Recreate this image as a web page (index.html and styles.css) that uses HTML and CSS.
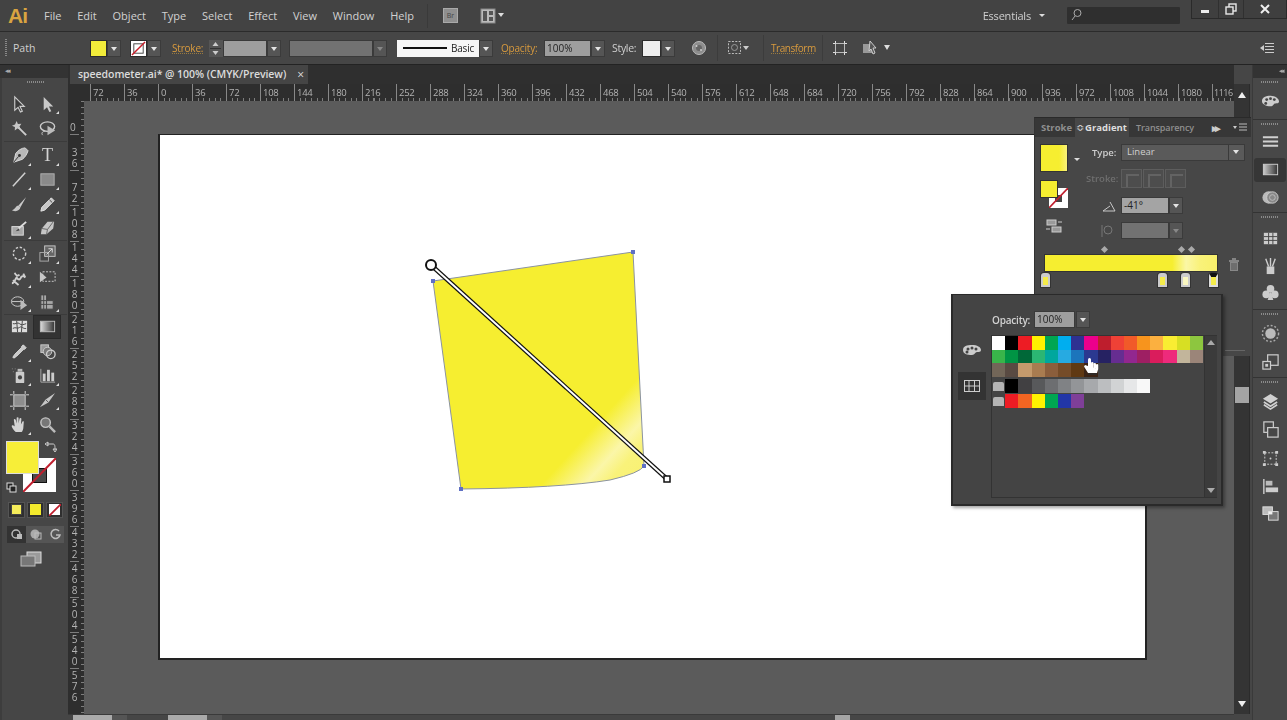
FILE: index.html
```html
<!DOCTYPE html>
<html lang="en">
<head>
<meta charset="utf-8">
<title>speedometer.ai</title>
<link rel="stylesheet" href="styles.css">
</head>
<body>
<div class="app">
  <header class="menubar">
    <div class="logo">Ai</div>
    <nav class="menus"><span>File</span><span>Edit</span><span>Object</span><span>Type</span><span>Select</span><span>Effect</span><span>View</span><span>Window</span><span>Help</span></nav>
    <div class="vsep"></div>
    <div class="br-btn">Br</div>
    <svg class="arr-btn" width="26" height="16" viewBox="0 0 26 16"><rect x="1" y="1" width="14" height="14" fill="#bbb" stroke="#888"/><rect x="3" y="3" width="4" height="10" fill="#555"/><rect x="9" y="3" width="4" height="4" fill="#555"/><rect x="9" y="9" width="4" height="4" fill="#555"/><path d="M18 5h6l-3 4z" fill="#ddd"/></svg>
    <div class="essentials">Essentials<i class="tiny-arrow"></i></div>
    <div class="search"><svg width="12" height="14" viewBox="0 0 12 14"><circle cx="7.500" cy="5" r="3.500" fill="none" stroke="#aaa"/><path d="M5 8l-3 4" stroke="#aaa"/></svg></div>
    <div class="winbtns">
      <div class="winbtn b1"><i class="min"></i></div>
      <div class="winbtn b2"><svg width="12" height="12" viewBox="0 0 12 12"><rect x="4" y="1" width="7" height="7" fill="none" stroke="#e8e8e8" stroke-width="1.400"/><rect x="1" y="4" width="7" height="7" fill="#444" stroke="#e8e8e8" stroke-width="1.400"/></svg></div>
      <div class="winbtn wide"><svg width="10" height="10" viewBox="0 0 10 10"><path d="M1 1l8 8M9 1l-8 8" stroke="#eee" stroke-width="2"/></svg></div>
    </div>
  </header>

  <section class="controlbar">
    <i class="grip-v"></i>
    <span class="ctl-path">Path</span>
    <div class="swatch yellow s-fill"></div><i class="dd"></i>
    <div class="swatch nostroke s-stroke"><svg width="15" height="15" viewBox="0 0 16 16"><rect x="3" y="3" width="10" height="10" fill="none" stroke="#444"/><path d="M1 15L15 1" stroke="#c8202c" stroke-width="1.600"/></svg></div><i class="dd"></i>
    <span class="orange m-stroke">Stroke:</span>
    <div class="spin"><svg width="13" height="17" viewBox="0 0 13 17"><path d="M6.500 2l3 4h-6zM6.500 15l3-4h-6z" fill="#ccc"/><path d="M1 8.500h11" stroke="#333"/></svg></div>
    <div class="input w44"></div><i class="dd"></i>
    <div class="input dis w84 m-dis"></div><i class="dd off"></i>
    <div class="basic"><i class="basic-line"></i><span>Basic</span></div><i class="dd"></i>
    <span class="orange m-opac">Opacity:</span>
    <div class="input w47 m-opin">100%</div><i class="dd"></i>
    <span class="style-lab">Style:</span>
    <div class="swatch style-sw"></div><i class="dd"></i>
    <svg class="m-globe" width="16" height="16" viewBox="0 0 16 16"><circle cx="8" cy="8" r="6.500" fill="#8d8d8d" stroke="#bbb"/><circle cx="8" cy="8" r="3" fill="#666"/><circle cx="5.500" cy="6" r="1" fill="#ccc"/><circle cx="10" cy="10" r="1" fill="#ccc"/></svg>
    <i class="cvsep m-s1"></i>
    <svg class="m-sel" width="24" height="16" viewBox="0 0 24 16"><rect x="1.500" y="1.500" width="12" height="12" fill="none" stroke="#bbb" stroke-dasharray="2 1.400"/><circle cx="7.500" cy="7.500" r="3" fill="none" stroke="#999"/><path d="M16 6h6l-3 4z" fill="#ccc"/></svg>
    <i class="cvsep m-s2"></i>
    <span class="orange dotted m-trans">Transform</span>
    <i class="cvsep m-s3"></i>
    <svg class="m-ic1" width="14" height="14" viewBox="0 0 14 14"><rect x="2.500" y="2.500" width="9" height="9" fill="none" stroke="#bbb"/><path d="M0 2.500h2.500M11.500 2.500H14M0 11.500h2.500M11.500 11.500H14M2.500 0v2.500M11.500 0v2.500M2.500 11.500V14M11.500 11.500V14" stroke="#ddd"/></svg>
    <svg class="m-ic2" width="30" height="16" viewBox="0 0 30 16"><rect x="1" y="4" width="9" height="9" fill="#999"/><path d="M8 1l6 7-3 0 2 5-2 1-2-5-2 2z" fill="#555" stroke="#ccc"/><path d="M22 5h6l-3 5z" fill="#ddd"/></svg>
    <svg class="m-menu" width="14" height="12" viewBox="0 0 14 12"><path d="M5 1.500h9M5 4.500h9M5 7.500h9M5 10.500h9" stroke="#ccc"/><path d="M0 6l4-3v6z" fill="#ccc"/></svg>
  </section>

  <main class="workspace">
    <aside class="toolstrip">
      <div class="strip-head"><span class="chev">◂◂</span></div>
      <div class="toolbox">
        <i class="grip-h"></i>
        <div class="toolgroup first">
          <div class="tool"><svg viewBox="0 0 20 20"><path d="M5 2v14l3.500-3 2.500 5 2-1-2.500-5H15z" fill="#3c3c3c" stroke="#ccc" stroke-width="1.200"/></svg></div>
          <div class="tool more"><svg viewBox="0 0 20 20"><path d="M6 2v14l3.500-3 2.500 5 2-1-2.500-5H16z" fill="#c9c9c9"/></svg></div>
          <div class="tool"><svg viewBox="0 0 20 20"><path d="M7 2l1.300 3.200L12 5l-2 2.800 1.200 3.200-3.400-1L5 12l.2-3.500L2 7l3.300-1.300z" fill="#c6c6c6"/><path d="M9 9l8 8" stroke="#ccc" stroke-width="2"/></svg></div>
          <div class="tool"><svg viewBox="0 0 20 20"><ellipse cx="10" cy="8" rx="7.500" ry="5" fill="none" stroke="#ccc" stroke-width="1.500"/><path d="M5 17c-2-2 0-4 2-4" fill="none" stroke="#ccc"/><path d="M10 7l8 5-8 5z" fill="#bbb"/></svg></div>
        </div>
        <div class="toolgroup">
          <div class="tool more"><svg viewBox="0 0 20 20"><path d="M16 2c-4 0-8 3-10 6l-2 9 9-3c3-2 5-6 6-9z" fill="#b8b8b8" stroke="#ddd"/><path d="M4 17l5-6" stroke="#333"/><circle cx="10" cy="10" r="1.500" fill="#333"/></svg></div>
          <div class="tool more"><svg viewBox="0 0 20 20"><text x="10" y="16" class="tee">T</text></svg></div>
          <div class="tool more"><svg viewBox="0 0 20 20"><path d="M3 17L16 3" stroke="#d0d0d0" stroke-width="1.600"/></svg></div>
          <div class="tool more"><svg viewBox="0 0 20 20"><rect x="3" y="4" width="14" height="12" fill="#8a8a8a" stroke="#b0b0b0"/></svg></div>
          <div class="tool"><svg viewBox="0 0 20 20"><path d="M17 2L9 11l2 2z" fill="#ccc"/><path d="M9 11c-3 0-3 4-7 5 4 2 8 1 9-3z" fill="#c6c6c6"/></svg></div>
          <div class="tool more"><svg viewBox="0 0 20 20"><path d="M14 3l3 3L7 16l-4 1 1-4z" fill="#c6c6c6" stroke="#e2e2e2"/><path d="M12 5l3 3" stroke="#444"/></svg></div>
          <div class="tool more"><svg viewBox="0 0 20 20"><rect x="2" y="8" width="12" height="9" fill="#a8a8a8" stroke="#ddd"/><path d="M17 3L9 10" stroke="#ddd" stroke-width="2"/><path d="M9 10l-3 3 4-1z" fill="#444"/></svg></div>
          <div class="tool"><svg viewBox="0 0 20 20"><path d="M10 3h7l-1 7-7 6H3l1-6z" fill="#c6c6c6"/><path d="M4 10l6 1 6-8M10 11l-1 5" stroke="#666" fill="none"/></svg></div>
        </div>
        <div class="toolgroup">
          <div class="tool more"><svg viewBox="0 0 20 20"><circle cx="10" cy="10" r="6.500" fill="none" stroke="#ccc" stroke-width="1.500" stroke-dasharray="2.500 1.800"/></svg></div>
          <div class="tool more"><svg viewBox="0 0 20 20"><rect x="7" y="2" width="11" height="11" fill="#666" stroke="#c8c8c8"/><rect x="2" y="9" width="9" height="9" fill="none" stroke="#aaa"/><path d="M9 11l6-6M11 5h4v4" stroke="#ddd" fill="none"/></svg></div>
          <div class="tool more"><svg viewBox="0 0 20 20"><path d="M2 16c3 0 3-4 5-6 1 2 3 3 4 1 1-3 3-3 5-1l-2-4M5 5c1 3 3 4 5 2M3 13l6 5" fill="none" stroke="#cfcfcf" stroke-width="2"/></svg></div>
          <div class="tool"><svg viewBox="0 0 20 20"><path d="M2 4v11l7-5z" fill="#c6c6c6"/><rect x="5" y="4" width="13" height="10" fill="none" stroke="#ccc" stroke-dasharray="2 1.500"/></svg></div>
          <div class="tool more"><svg viewBox="0 0 20 20"><ellipse cx="8" cy="9" rx="6.500" ry="5" fill="none" stroke="#ccc"/><path d="M2 9h12" stroke="#ccc"/><path d="M11 7l7 6-7 5z" fill="#bbb"/></svg></div>
          <div class="tool more"><svg viewBox="0 0 20 20"><path d="M3 2h6v6h7v9H3zM3 8h6M3 12h13M9 8v9M6 2v15" fill="#a8a8a8" stroke="#444"/></svg></div>
        </div>
        <div class="toolgroup last">
          <div class="tool"><svg viewBox="0 0 20 20"><rect x="2" y="4" width="16" height="12" fill="#ddd"/><path d="M3 7c3 1 5-2 7 0s4 1 7 0M3 12c3-2 5 1 7-1s4 2 7 1M7 4l1 12M13 4l-1 12" fill="none" stroke="#444"/></svg></div>
          <div class="tool active"><svg viewBox="0 0 20 20"><defs><linearGradient id="gt"><stop offset="0" stop-color="#ddd"/><stop offset="1" stop-color="#333"/></linearGradient></defs><rect x="2.500" y="4.500" width="15" height="11" fill="url(#gt)" stroke="#bbb"/></svg></div>
          <div class="tool more"><svg viewBox="0 0 20 20"><path d="M14 3l3 3-2 2-1 0-7 7-3 2-1-1 2-3 7-7 0-1z" fill="#c9c9c9" stroke="#ddd"/></svg></div>
          <div class="tool"><svg viewBox="0 0 20 20"><rect x="3" y="3" width="8" height="8" fill="#999" stroke="#ccc"/><circle cx="10" cy="10" r="4.500" fill="#777" stroke="#ccc"/><circle cx="13.500" cy="13" r="4.500" fill="none" stroke="#ccc" stroke-width="1.400"/></svg></div>
          <div class="tool more"><svg viewBox="0 0 20 20"><rect x="6" y="6" width="9" height="12" rx="1" fill="#ccc"/><rect x="8" y="3" width="5" height="3" fill="#bbb"/><circle cx="10.500" cy="12" r="2.200" fill="#444"/><path d="M2 3h1M5 3h1M3 6h1" stroke="#888"/></svg></div>
          <div class="tool more"><svg viewBox="0 0 20 20"><path d="M3 3v14h15" fill="none" stroke="#aaa"/><rect x="5" y="8" width="3" height="8" fill="#ccc"/><rect x="9.500" y="4" width="3" height="12" fill="#ccc"/><rect x="14" y="7" width="3" height="9" fill="#ccc"/></svg></div>
          <div class="tool"><svg viewBox="0 0 20 20"><rect x="4" y="4" width="12" height="12" fill="#8e8e8e" stroke="#ccc"/><path d="M0 4h3M17 4h3M0 16h3M17 16h3M4 0v3M16 0v3M4 17v3M16 17v3" stroke="#ddd"/></svg></div>
          <div class="tool more"><svg viewBox="0 0 20 20"><path d="M18 2L8 9l-6 8 9-5z" fill="#c6c6c6"/><path d="M8 9l3 3" stroke="#555"/></svg></div>
          <div class="tool more"><svg viewBox="0 0 20 20"><path d="M6 18c-2-2-5-6-4-7s3 1 3 1L4 5c0-1 1.500-1 2 0l1 4 0-6c0-1 2-1 2 0v6l1-5c0-1 2-1 2 0l-.5 6 1.500-3c.5-1 2-.5 1.500.5L14 14c-.5 2-1 4-2 4z" fill="#d4d4d4"/></svg></div>
          <div class="tool"><svg viewBox="0 0 20 20"><circle cx="8" cy="8" r="5" fill="#777" stroke="#c4c4c4" stroke-width="1.500"/><path d="M12 12l6 6" stroke="#bbb" stroke-width="2.500"/></svg></div>
        </div>
        <div class="fillstroke">
          <div class="fs-stroke"><i></i><svg width="33" height="34" viewBox="0 0 33 34"><path d="M0 34L33 0" stroke="#c01f2e" stroke-width="2"/></svg></div>
          <div class="fs-fill"></div>
          <svg class="fs-swap" width="12" height="12" viewBox="0 0 12 12"><path d="M2 3h6c2 0 2 2 2 6M0 3l3-2v4zM10 11L8 8h4z" fill="none" stroke="#ccc" stroke-width="1"/></svg>
          <svg class="fs-def" width="11" height="11" viewBox="0 0 11 11"><rect x="1" y="1" width="6" height="6" fill="#222" stroke="#ddd"/><rect x="4" y="4" width="6" height="6" fill="#222" stroke="#ddd"/></svg>
        </div>
        <div class="modes">
          <div class="mode"><i class="m-y1"></i></div>
          <div class="mode"><i class="m-y2"></i></div>
          <div class="mode"><i class="m-none"><svg width="12" height="12" viewBox="0 0 12 12"><path d="M0 12L12 0" stroke="#c01f2e" stroke-width="1.800"/></svg></i></div>
        </div>
        <div class="draws">
          <div class="draw dark"><svg width="12" height="12" viewBox="0 0 12 12"><circle cx="5" cy="6" r="4" fill="none" stroke="#bbb" stroke-width="1.500"/><rect x="6" y="6" width="5" height="5" fill="#bbb"/></svg></div>
          <div class="draw"><svg width="12" height="12" viewBox="0 0 12 12"><circle cx="5" cy="6" r="4.500" fill="#aaa"/><rect x="5" y="5" width="6" height="6" fill="none" stroke="#bbb"/></svg></div>
          <div class="draw"><svg width="12" height="12" viewBox="0 0 12 12"><path d="M10 3a4.500 4.500 0 1 0 1 4H7" fill="none" stroke="#bbb" stroke-width="1.500"/></svg></div>
        </div>
        <div class="screenmode"><svg width="22" height="16" viewBox="0 0 22 16"><rect x="7" y="1" width="14" height="11" fill="#9a9a9a" stroke="#ddd"/><rect x="1" y="5" width="14" height="10" fill="#777" stroke="#bbb"/></svg></div>
      </div>
    </aside>

    <div class="docarea">
      <div class="tabs"><div class="tab">speedometer.ai* @ 100% (CMYK/Preview)<span class="tabx">×</span></div></div>
      <div class="hruler">
        <span>72</span><span>36</span><span>0</span><span>36</span><span>72</span><span>108</span><span>144</span><span>180</span><span>216</span><span>252</span><span>288</span><span>324</span><span>360</span><span>396</span><span>432</span><span>468</span><span>504</span><span>540</span><span>576</span><span>612</span><span>648</span><span>684</span><span>720</span><span>756</span><span>792</span><span>828</span><span>864</span><span>900</span><span>936</span><span>972</span><span>1008</span><span>1044</span><span>1080</span><span>1116</span>
      </div>
      <div class="midrow">
        <div class="vruler">
          <span class="v0">0</span><span>36</span><span>72</span><span>108</span><span>144</span><span>180</span><span>216</span><span>252</span><span>288</span><span>324</span><span>360</span><span>396</span><span>432</span><span>468</span><span>504</span><span>540</span><span>576</span>
        </div>
        <div class="canvas">
          <div class="artboard"></div>
          <svg class="art" width="1152" height="613" viewBox="84 101 1152 613">
            <defs>
              <linearGradient id="fillg" gradientUnits="userSpaceOnUse" x1="431" y1="265" x2="667" y2="479">
                <stop offset="0" stop-color="#f6ee30"/>
                <stop offset=".72" stop-color="#f6ee30"/>
                <stop offset=".82" stop-color="#fbf6a8"/>
                <stop offset=".87" stop-color="#f9f27a"/>
                <stop offset="1" stop-color="#f8f06a"/>
              </linearGradient>
            </defs>
            <path d="M433 281L633 252L644 466Q640 473 610 480Q560 488 461 489Z" fill="url(#fillg)" stroke="#8b93a0" stroke-width="1"/>
            <g fill="#5f70c4"><rect x="431" y="279" width="4" height="4"/><rect x="631" y="250" width="4" height="4"/><rect x="642" y="464" width="4" height="4"/><rect x="459" y="487" width="4" height="4"/></g>
            <path d="M431 265L667 479" stroke="#111" stroke-width="4.400"/>
            <path d="M431 265L667 479" stroke="#fff" stroke-width="2"/>
            <circle cx="431" cy="265" r="5" fill="#fff" stroke="#111" stroke-width="2"/>
            <rect x="664" y="476" width="6" height="6" fill="#fff" stroke="#111" stroke-width="1.500"/>
          </svg>
        </div>
      </div>
      <div class="status">
        <div class="st-light"></div><i class="st-dd"></i><div class="st-mid"></div>
        <div class="st-light"></div><i class="st-dd"></i><div class="st-mid"></div>
        <div class="st-fill"></div>
        <i class="st-thumb"></i>
      </div>
    </div>

    <div class="vscroll"><i class="tri-up"></i><i class="thumb"></i><i class="tri-down"></i></div>

    <aside class="dock">
      <div class="strip-head right"><span class="chev">◂◂</span></div>
      <div class="dockgroup g1"><i class="grip-h"></i>
        <div class="dic"><svg viewBox="0 0 20 20"><path d="M10 4c5 0 9 3 9 6 0 2-2 2-4 2s-2 3-5 3c-5 0-9-2-9-5.500S5 4 10 4z" fill="#ccc"/><circle cx="6" cy="8" r="1.500" fill="#444"/><circle cx="10" cy="7" r="1.500" fill="#444"/><circle cx="14" cy="8" r="1.500" fill="#444"/><circle cx="5" cy="12" r="1.500" fill="#444"/></svg></div>
      </div>
      <div class="dockgroup g2"><i class="grip-h"></i>
        <div class="dic"><svg viewBox="0 0 20 20"><path d="M2 5.500h16M2 10h16M2 14.500h16" stroke="#d0d0d0" stroke-width="2"/></svg></div>
        <div class="dic act"><svg viewBox="0 0 20 20"><defs><linearGradient id="gd"><stop offset="0" stop-color="#ccc"/><stop offset="1" stop-color="#333"/></linearGradient></defs><rect x="2.500" y="4.500" width="15" height="11" fill="url(#gd)" stroke="#ccc"/></svg></div>
        <div class="dic"><svg viewBox="0 0 20 20"><circle cx="8" cy="10" r="6.500" fill="#bbb"/><circle cx="12" cy="10" r="6" fill="#888" stroke="#ccc"/><circle cx="12" cy="10" r="3" fill="none" stroke="#bbb"/></svg></div>
      </div>
      <div class="dockgroup g3"><i class="grip-h"></i>
        <div class="dic"><svg viewBox="0 0 20 20"><rect x="3" y="4" width="14" height="12" fill="#ccc"/><path d="M3 8h14M3 12h14M8 4v12M12.500 4v12" stroke="#444"/></svg></div>
        <div class="dic"><svg viewBox="0 0 20 20"><rect x="6" y="11" width="8" height="8" fill="#ccc"/><path d="M8 11L5 3M10 11V2M12 11l3-8" stroke="#ccc" stroke-width="1.500"/></svg></div>
        <div class="dic"><svg viewBox="0 0 20 20"><circle cx="10" cy="6" r="4" fill="#ccc"/><circle cx="5.500" cy="12" r="4" fill="#ccc"/><circle cx="14.500" cy="12" r="4" fill="#ccc"/><path d="M10 9l3 9H7z" fill="#ccc"/></svg></div>
      </div>
      <div class="dockgroup g4"><i class="grip-h"></i>
        <div class="dic"><svg viewBox="0 0 20 20"><circle cx="10" cy="10" r="5.500" fill="#bbb"/><circle cx="10" cy="10" r="8.500" fill="none" stroke="#aaa" stroke-width="1.500" stroke-dasharray="2 2"/></svg></div>
        <div class="dic"><svg viewBox="0 0 20 20"><rect x="7" y="3" width="11" height="11" fill="none" stroke="#ccc" stroke-width="1.300"/><rect x="2" y="10" width="8" height="8" fill="#474747" stroke="#ccc" stroke-width="1.300"/><rect x="4.500" y="12.500" width="3" height="3" fill="#ccc"/></svg></div>
      </div>
      <div class="dockgroup g5"><i class="grip-h"></i>
        <div class="dic"><svg viewBox="0 0 20 20"><path d="M10 2l8 5-8 5-8-5z" fill="#d0d0d0"/><path d="M3 10.500l7 4.500 7-4.500M3 13.500l7 4.500 7-4.500" fill="none" stroke="#d0d0d0" stroke-width="1.800"/></svg></div>
        <div class="dic"><svg viewBox="0 0 20 20"><rect x="3" y="2" width="10" height="11" fill="none" stroke="#ccc" stroke-width="1.300"/><rect x="7" y="8" width="11" height="10" fill="#474747" stroke="#ccc" stroke-width="1.300"/></svg></div>
        <div class="dic"><svg viewBox="0 0 20 20"><rect x="4" y="4" width="12" height="12" fill="none" stroke="#ccc" stroke-dasharray="2 1.500"/><path d="M2 2h3v3H2zM15 2h3v3h-3zM2 15h3v3H2zM15 15h3v3h-3z" fill="#ccc"/><circle cx="10" cy="10" r="1" fill="#ccc"/></svg></div>
        <div class="dic"><svg viewBox="0 0 20 20"><path d="M3 2v16" stroke="#ccc" stroke-width="1.500"/><rect x="5" y="4" width="7" height="5" fill="#bbb"/><rect x="5" y="11" width="13" height="5" fill="#ccc"/></svg></div>
        <div class="dic last-ic"><svg viewBox="0 0 20 20"><rect x="2" y="3" width="10" height="8" fill="#bbb" stroke="#ddd"/><rect x="8" y="8" width="10" height="9" fill="#777" stroke="#ddd"/><rect x="8" y="8" width="4" height="3" fill="#eee"/></svg></div>
      </div>
    </aside>
  </main>

  <section class="gradpanel">
    <div class="gp-tabs">
      <span class="gp-tab">Stroke</span>
      <span class="gp-tab on"><b class="updown">≎</b>Gradient</span>
      <span class="gp-tab clip">Transparency</span>
      <span class="gp-more">▸▸</span>
      <svg class="gp-menu" width="14" height="10" viewBox="0 0 14 10"><path d="M0 3h4l-2 3z" fill="#ccc"/><path d="M6 1h8M6 4h8M6 7h8" stroke="#bbb"/></svg>
    </div>
    <div class="gp-body">
      <div class="gp-left">
        <div class="big-sw-row"><div class="big-sw"></div><i class="tiny-arrow"></i></div>
        <div class="small-sw">
          <div class="ss-stroke"><svg width="19" height="20" viewBox="0 0 19 20"><rect x="6" y="7" width="7" height="7" fill="#444"/><path d="M0 20L19 0" stroke="#c01f2e" stroke-width="1.600"/></svg></div>
          <div class="ss-fill"></div>
        </div>
        <svg class="rev-ic" width="16" height="14" viewBox="0 0 16 14"><rect x="1" y="1" width="9" height="5" fill="#999" stroke="#ccc"/><rect x="6" y="8" width="9" height="5" fill="#999" stroke="#ccc"/><path d="M12 3h4M0 10h4" stroke="#ccc"/></svg>
      </div>
      <div class="gp-form">
        <div class="gp-row r-type"><label>Type:</label><div class="selectbox">Linear<i class="sel-div"></i></div></div>
        <div class="gp-row r-str"><label class="dim">Stroke:</label><div class="str-btns"><i></i><i></i><i></i></div></div>
        <div class="gp-row r-ang"><svg class="ang" width="14" height="12" viewBox="0 0 14 12"><path d="M1 11h12L8 2M1 11l7-5" fill="none" stroke="#c8c8c8"/></svg><div class="input w48 ang-in">-41°</div><i class="dd"></i></div>
        <div class="gp-row r-asp"><svg class="ang dimic" width="14" height="14" viewBox="0 0 14 14"><path d="M2 1v12" stroke="#777"/><circle cx="8" cy="6" r="4" fill="none" stroke="#777"/></svg><div class="input dis w48"></div><i class="dd off"></i></div>
      </div>
    </div>
    <div class="gp-slider">
      <i class="dia d1"></i><i class="dia d2"></i><i class="dia d3"></i>
      <div class="gbar"></div>
      <svg class="trash" width="12" height="14" viewBox="0 0 12 14"><path d="M1 3h10M4 1h4" stroke="#999" stroke-width="1.400"/><path d="M2 4h8v9H2z" fill="#888"/><path d="M4 5v7M6 5v7M8 5v7" stroke="#555"/></svg>
      <i class="stop s1"></i><i class="stop s2"></i><i class="stop s3"></i><i class="stop s4"></i>
    </div>
    <i class="grip-h gp-grip"></i>
  </section>

  <section class="flyout">
    <div class="fly-op"><span>Opacity:</span><div class="input w41">100%</div><i class="dd"></i></div>
    <div class="fly-body">
      <div class="fly-side">
        <div class="fs-btn"><svg width="20" height="16" viewBox="0 0 20 16"><path d="M10 2c5 0 9 2 9 5 0 2-2 2-4 2s-2 3-5 3c-5 0-9-1-9-5s4-5 9-5z" fill="#ccc"/><circle cx="6" cy="6" r="1.500" fill="#444"/><circle cx="10" cy="5" r="1.500" fill="#444"/><circle cx="14" cy="6" r="1.500" fill="#444"/><circle cx="5" cy="9" r="1.500" fill="#444"/></svg></div>
        <div class="fs-btn on"><svg width="16" height="12" viewBox="0 0 16 12"><rect x=".5" y=".5" width="15" height="11" fill="#333" stroke="#ccc"/><path d="M0 6h16M5 0v12M10.500 0v12" stroke="#ccc"/></svg></div>
      </div>
      <div class="fly-list">
        <div class="swatches">
          <i style="background:#fff"></i><i style="background:#000"></i><i style="background:#ed1c24"></i><i style="background:#fff200"></i><i style="background:#00a651"></i><i style="background:#00aeef"></i><i style="background:#2e3192"></i><i style="background:#ec008c"></i><i style="background:#be1e2d"></i><i style="background:#ef4136"></i><i style="background:#f15a29"></i><i style="background:#f7941d"></i><i style="background:#fbb040"></i><i style="background:#f9ed32"></i><i style="background:#d7df23"></i><i style="background:#8dc63f"></i>
          <i style="background:#39b54a"></i><i style="background:#009444"></i><i style="background:#006838"></i><i style="background:#2bb673"></i><i style="background:#00a79d"></i><i style="background:#27aae1"></i><i style="background:#1c75bc"></i><i style="background:#2b3990"></i><i style="background:#262262"></i><i style="background:#662d91"></i><i style="background:#92278f"></i><i style="background:#9e1f63"></i><i style="background:#da1c5c"></i><i style="background:#ee2a7b"></i><i style="background:#c2b59b"></i><i style="background:#9b8579"></i>
          <i style="background:#726658"></i><i style="background:#594a42"></i><i style="background:#c49a6c"></i><i style="background:#a97c50"></i><i style="background:#8b5e3c"></i><i style="background:#754c29"></i><i style="background:#603913"></i><i style="background:#3c2415"></i>
        </div>
        <div class="swatches grp">
          <i class="folder"></i><i style="background:#000"></i><i style="background:#414042"></i><i style="background:#58595b"></i><i style="background:#6d6e71"></i><i style="background:#808285"></i><i style="background:#939598"></i><i style="background:#a7a9ac"></i><i style="background:#bcbec0"></i><i style="background:#d1d3d4"></i><i style="background:#e6e7e8"></i><i style="background:#f8f8f8"></i>
        </div>
        <div class="swatches grp2">
          <i class="folder"></i><i style="background:#ed1c24"></i><i style="background:#f26522"></i><i style="background:#fff200"></i><i style="background:#00a651"></i><i style="background:#2236a8"></i><i style="background:#7f3f98"></i>
        </div>
        <div class="fly-scroll"><i class="tri-up small"></i><i class="tri-down small"></i></div>
      </div>
    </div>
    <svg class="cursor" width="16" height="18" viewBox="0 0 16 18"><g fill="#fff"><rect x="5" y="1" width="3" height="11" rx="1.500"/><rect x="8" y="5" width="2.500" height="7" rx="1.200"/><rect x="10.500" y="6" width="2.500" height="6" rx="1.200"/><rect x="13" y="7" width="2.200" height="6" rx="1.100"/><path d="M5 9L2 8 1 9.500 5 16h9l1.200-4z"/></g><path d="M5 17h9" stroke="#2c2c2c" stroke-width="1.500"/></svg>
  </section>
</div>
</body>
</html>
```
FILE: styles.css
```css
* { box-sizing: border-box; }
html, body { margin: 0; padding: 0; background: #464646; overflow: hidden; }
body { font-family: "Open Sans", "Noto Sans", sans-serif; color: #ccc; font-size: 11px; }
i { display: block; font-style: normal; }
.app { position: relative; width: 1287px; height: 720px; display: flex; flex-direction: column; overflow: hidden; filter: blur(.35px); }

/* menu bar */
.menubar { height: 32px; flex: none; display: flex; align-items: center; background: #434343; border-bottom: 1px solid #2b2b2b; position: relative; }
.logo { width: 44px; padding-left: 8px; font: bold 21px "Liberation Sans", sans-serif; color: #d9a441; letter-spacing: -.8px; }
.menus { display: flex; gap: 15.800px; font-size: 11px; color: #d2d2d2; }
.vsep { width: 1px; height: 24px; background: #3a3a3a; margin-left: 13px; }
.br-btn { width: 15px; height: 15px; margin-left: 15px; background: #8f8f8f; border: 1px solid #aaa; font-size: 7px; line-height: 13px; text-align: center; color: #444; }
.arr-btn { margin-left: 22px; }
.essentials { margin-left: auto; display: flex; align-items: center; gap: 8px; font-size: 11px; color: #cfcfcf; letter-spacing: -.2px; }
.tiny-arrow { width: 0; height: 0; border: 3px solid transparent; border-top-color: #ddd; border-bottom: 0; }
.search { width: 113px; height: 17px; margin-left: 22px; margin-right: 11px; background: #2f2f2f; border-radius: 1px; padding: 1px 3px; display: flex; align-items: center; margin-bottom: 1px; }
.winbtns { align-self: flex-start; display: flex; width: 96px; height: 19px; background: #3f3f3f; border: 1px solid #2a2a2a; border-top: 0; }
.winbtn { display: flex; align-items: center; justify-content: center; border-right: 1px solid #303030; }
.b1 { width: 27px; }
.b2 { width: 25px; }
.winbtn.wide { width: 42px; border: 0; }
.min { width: 8px; height: 3px; background: #eee; margin-top: 4px; }

/* control bar */
.controlbar { height: 33px; flex: none; display: flex; align-items: center; background: #464646; border-bottom: 1px solid #232323; position: relative; }
.grip-v { width: 2px; height: 18px; margin-left: 5px; background: repeating-linear-gradient(#888 0 1px, transparent 1px 2px); }
.ctl-path { margin-left: 6px; width: 77px; font-size: 10.500px; color: #d0d0d0; }
.swatch { width: 17px; height: 17px; flex: none; border: 1px solid #2c2c2c; }
.yellow { background: #f2ec3a; }
.nostroke { background: #fff; margin-left: 9px; }
.dd { width: 14px; height: 17px; flex: none; background: #555; position: relative; border: 1px solid #3b3b3b; }
.dd::after { content: ""; position: absolute; left: 3px; top: 6px; border: 3.500px solid transparent; border-top: 4px solid #e4e4e4; border-bottom: 0; }
.dd.off::after { border-top-color: #888; }
.orange { color: #d99b3e; font-size: 10px; }
.m-stroke { margin-left: 11px; width: 37px; letter-spacing: -.2px; text-decoration: underline dotted #9a7a3e; }
.spin { width: 14px; height: 17px; background: #555; border: 0; flex: none; }
.input { height: 17px; flex: none; background: #9e9e9e; border: 1px solid #3a3a3a; font-size: 10px; color: #222; padding-left: 2px; line-height: 15px; }
.input.dis { background: #727272; }
.w44 { width: 44px; }
.w84 { width: 84px; }
.w47 { width: 47px; }
.w48 { width: 48px; }
.w41 { width: 41px; }
.m-dis { margin-left: 8px; }
.basic { width: 82px; height: 17px; flex: none; margin-left: 10px; background: #f6f6f6; display: flex; align-items: center; gap: 4px; padding-left: 6px; font-size: 10px; color: #222; letter-spacing: -.2px; }
.basic-line { width: 44px; height: 2px; background: #111; }
.m-opac { margin-left: 8px; width: 43px; letter-spacing: -.2px; text-decoration: underline dotted #9a7a3e; }
.style-lab { margin-left: 7px; width: 30px; font-size: 10.500px; color: #cfcfcf; letter-spacing: -.3px; }
.style-sw { background: #eee; width: 19px; }
.m-globe { margin-left: 16px; }
.cvsep { width: 1px; height: 26px; background: #3c3c3c; flex: none; }
.m-s1 { margin-left: 10px; }
.m-sel { margin-left: 9px; }
.m-s2 { margin-left: 12px; }
.m-trans { margin-left: 7px; text-decoration: underline dotted #9a7a3e; width: 44px; letter-spacing: -.45px; white-space: nowrap; }
.m-s3 { margin-left: 7px; }
.m-ic1 { margin-left: 10px; }
.m-ic2 { margin-left: 15px; }
.m-menu { margin-left: auto; margin-right: 13px; }

/* workspace */
.workspace { flex: 1; display: flex; min-height: 0; }
.toolstrip { width: 68px; flex: none; background: #464646; display: flex; flex-direction: column; }
.strip-head { height: 13px; flex: none; background: #333; position: relative; }
.chev { position: absolute; left: 5px; top: 0; font-size: 7px; color: #aaa; letter-spacing: -2px; line-height: 12px; }
.strip-head.right .chev { left: 26px; }
.toolbox { flex: 1; padding-left: 2px; background: #464646; border-left: 2px solid #3d3d3d; margin-right: 1px; }
.grip-h { width: 18px; height: 2px; margin: 3px auto 0; background: repeating-linear-gradient(90deg, #8a8a8a 0 1px, transparent 1px 2px); }
.toolgroup { display: grid; grid-template-columns: 28px 28px; grid-auto-rows: 24.400px; padding-left: 1px; border-bottom: 1px solid #3b3b3b; height: 73px; }
.toolgroup.first { margin-top: 9px; height: 49.800px; margin-bottom: 1.500px; }
.toolgroup:nth-of-type(2) { height: 98px; }
.toolgroup:nth-of-type(3) { height: 73.500px; }
.toolgroup.last { height: 124px; border-bottom: 0; }
.tool { position: relative; display: flex; align-items: center; justify-content: center; }
.tool svg { width: 19px; height: 19px; overflow: visible; }
.tool.more::after { content: ""; position: absolute; right: 2px; bottom: 2px; border-style: solid; border-width: 0 0 3px 3px; border-color: transparent transparent #ddd transparent; }
.tool.active { background: #333; border: 1px solid #2a2a2a; }
.tee { font: 19px "Liberation Serif", serif; fill: #d4d4d4; text-anchor: middle; }
.fillstroke { position: relative; height: 56px; margin-top: 2px; }
.fs-fill { position: absolute; left: 2px; top: 0; width: 33px; height: 33px; background: #f7ee38; border: 1px solid #ddd; }
.fs-stroke { position: absolute; left: 19px; top: 17px; width: 33px; height: 34px; background: #fff; overflow: hidden; }
.fs-stroke i { position: absolute; left: 9px; top: 10px; width: 15px; height: 15px; background: #4a4a4a; border: 1px solid #111; }
.fs-stroke svg { position: absolute; left: 0; top: 0; }
.fs-swap { position: absolute; left: 41px; top: 0; }
.fs-def { position: absolute; left: 2px; top: 41px; }
.modes { display: flex; gap: 2px; margin: 5px 0 0 4px; }
.mode { width: 17px; height: 16px; background: #2f2f2f; border: 1px solid #555; display: flex; align-items: center; justify-content: center; }
.m-y1, .m-y2, .m-none { width: 11px; height: 11px; }
.m-y1 { background: #f5ec5a; border: 1px solid #444; }
.m-y2 { background: #f3ea2c; }
.m-none { background: #fff; }
.draws { display: flex; margin: 8px 0 0 3px; }
.draw { width: 19px; height: 17px; background: #555; display: flex; align-items: center; justify-content: center; }
.draw.dark { background: #333; }
.screenmode { margin: 8px 0 0 16px; }

/* document */
.docarea { flex: 1; min-width: 0; display: flex; flex-direction: column; }
.tabs { height: 19px; flex: none; background: #2f2f2f; padding-left: 2px; }
.tab { width: 238px; height: 19px; background: #454545; padding-left: 8px; font-size: 10.500px; font-weight: 600; line-height: 19px; color: #dcdcdc; white-space: nowrap; letter-spacing: -.05px; display: flex; }
.tabx { margin-left: 11px; font-size: 12px; color: #ddd; font-weight: 400; }
.hruler { height: 17px; flex: none; display: flex; overflow: hidden; padding-left: 22px; background: #2e2e2e repeating-linear-gradient(90deg, #7d7d7d 0 1px, transparent 1px 5.670px) 22px 14px / 100% 3px no-repeat; }
.hruler span { width: 34px; flex: none; padding-left: 2px; border-left: 1px solid #888; font-size: 9.500px; line-height: 18px; height: 17px; color: #b4b4b4; letter-spacing: -.3px; }
.hruler span:last-child { width: 23px; padding-left: 1px; font-size: 9px; letter-spacing: -.5px; }
.midrow { flex: 1; min-height: 0; display: flex; }
.vruler { width: 16px; flex: none; background: #2e2e2e repeating-linear-gradient(#7d7d7d 0 1px, transparent 1px 5.930px) 13px 0 / 3px 100% no-repeat; overflow: hidden; display: flex; flex-direction: column; }
.vruler span { height: 35.600px; flex: none; width: 9px; margin-left: 2px; padding-bottom: 2px; font-size: 10px; line-height: 11px; color: #b4b4b4; word-break: break-all; text-align: center; display: flex; align-items: flex-end; box-shadow: 0 -1px 0 #7d7d7d; }
.vruler .v0 { height: 34px; }
.canvas { flex: 1; position: relative; background: #5b5b5b; overflow: hidden; }
.artboard { position: absolute; left: 74px; top: 33px; width: 989px; height: 526px; background: #fff; border: 2px solid #222; border-width: 1px 2px 2px 2px; }
.art { position: absolute; left: 0; top: 0; }
.status { height: 6px; flex: none; background: #464646; display: flex; align-items: flex-start; padding-left: 5px; position: relative; overflow: hidden; border-top: 1px solid #3a3a3a; }
.st-light { width: 39px; height: 6px; background: #aaa; flex: none; }
.st-dd { width: 15px; height: 6px; background: #555; flex: none; }
.st-mid { width: 41px; height: 6px; flex: none; }
.st-fill { flex: 1; }
.st-thumb { position: absolute; left: 767px; top: 0; width: 15px; height: 6px; background: #a4a4a4; }
.vscroll { width: 16px; flex: none; margin-top: 19px; margin-bottom: 6px; background: #343434; border-right: 1px solid #2b2b2b; position: relative; display: flex; flex-direction: column; align-items: center; }
.tri-up, .tri-down { border: 4.500px solid transparent; width: 0; height: 0; }
.tri-up { border-bottom: 6px solid #eee; border-top: 0; position: absolute; top: 8px; }
.tri-down { border-top: 6px solid #eee; border-bottom: 0; position: absolute; bottom: 7px; }
.thumb { position: absolute; left: 1px; top: 303px; width: 14px; height: 16px; background: #a4a4a4; }
.dock { width: 35px; margin-left: 2px; flex: none; background: #484848; display: flex; flex-direction: column; border-left: 1px solid #3a3a3a; }
.dockgroup { border-bottom: 1px solid #333; display: flex; flex-direction: column; align-items: center; }
.g1 { height: 42px; }
.g2 { height: 93px; }
.g3 { height: 97px; }
.g4 { height: 68px; }
.g5 { border-bottom: 0; }
.dic { width: 32px; height: 28.500px; display: flex; align-items: center; justify-content: center; flex: none; }
.dic svg { width: 19px; height: 19px; }
.grip-h + .dic { margin-top: 4px; }
.g2 .act { height: 24px; margin: 3px 0 2px; }
.g2 .grip-h + .dic { height: 27px; margin-top: 3px; }
.g3 .dic { height: 27px; }
.g3 .grip-h + .dic { margin-top: 6.500px; }
.last-ic { height: 24px; }
.dic.act { background: #363636; border-radius: 3px; }

/* gradient panel */
.gradpanel { position: absolute; left: 1034px; top: 117px; width: 217px; height: 239px; background: #474747; border-top: 1px solid #2a2a2a; border-left: 1px solid #333; }
.gp-tabs { height: 19px; background: #373737; display: flex; align-items: center; font-size: 9.500px; font-weight: 700; color: #8f8f8f; position: relative; }
.gp-tab { padding: 0 3px 0 6px; line-height: 19px; white-space: nowrap; }
.gp-tab.on { background: #474747; color: #dedede; width: 54px; padding: 0 0 0 1px; margin-left: 0; }
.updown { font-weight: 400; margin-right: 1px; }
.gp-tab.clip { padding: 0; margin-left: 7px; font-size: 9px; font-weight: 600; letter-spacing: -.1px; }
.gp-more { position: absolute; left: 177px; font-size: 11px; letter-spacing: -3px; color: #ccc; }
.gp-menu { position: absolute; left: 198px; top: 5px; }
.gp-body { display: flex; height: 108px; padding-top: 7px; }
.gp-left { width: 57px; padding-left: 5px; flex: none; }
.big-sw-row { display: flex; align-items: center; gap: 6px; }
.big-sw { width: 28px; height: 28px; background: linear-gradient(90deg, #f6ee30 70%, #faf27a); border: 1px solid #333; }
.big-sw-row .tiny-arrow { margin-top: 3px; }
.small-sw { position: relative; height: 36px; margin-top: 8px; }
.ss-fill { position: absolute; left: 0; top: 0; width: 18px; height: 18px; background: #f6ee30; border: 1px solid #333; }
.ss-stroke { position: absolute; left: 9px; top: 8px; width: 19px; height: 20px; background: #fff; }
.rev-ic { display: block; margin: 3px 0 0 6px; }
.gp-form { display: flex; flex-direction: column; }
.gp-row { display: flex; align-items: center; position: relative; }
.gp-row label { width: 24px; font-size: 9.500px; font-weight: 600; color: #cdcdcd; white-space: nowrap; text-align: right; }
.gp-row label.dim { color: #6f6f6f; width: 30px; margin-left: -6px; }
.r-type { height: 17px; }
.r-str { height: 19px; margin-top: 8px; }
.r-ang { height: 17px; margin-top: 9px; padding-left: 10px; }
.r-asp { height: 17px; margin-top: 8px; padding-left: 10px; }
.r-type label, .r-str label { margin-right: 5px; }
.selectbox { width: 124px; height: 17px; background: #5a5a5a; border: 1px solid #3a3a3a; font-size: 9.500px; line-height: 13px; padding-left: 5px; color: #cfcfcf; position: relative; }
.sel-div { position: absolute; right: 0; top: 0; width: 16px; height: 15px; border-left: 1px solid #3a3a3a; }
.sel-div::after { content: ""; position: absolute; left: 4px; top: 5px; border: 3.500px solid transparent; border-top: 4px solid #e4e4e4; border-bottom: 0; }
.str-btns { display: flex; gap: 1px; }
.str-btns i { position: relative; width: 21px; height: 19px; background: #4d4d4d; border: 1px solid #5d5d5d; }
.str-btns i::after { content: ""; position: absolute; left: 4px; top: 4px; width: 11px; height: 11px; border-left: 2px solid #636363; border-top: 2px solid #636363; }
.ang { width: 14px; margin-right: 5px; flex: none; }
.dimic { margin-left: -2px; margin-right: 7px; }
.ang-in { background: #a4a4a4; }
.gp-slider { position: relative; height: 44px; }
.dia { position: absolute; top: 2px; width: 5px; height: 5px; background: #aaa; transform: rotate(45deg); }
.d1 { left: 67px; }
.d2 { left: 144px; }
.d3 { left: 154px; }
.gbar { position: absolute; left: 9px; top: 9px; width: 174px; height: 18px; background: linear-gradient(90deg, #f6ee30 0, #f6ee30 74%, #fbf7a6 82%, #f9f27a 90%, #f8f06a 100%); border: 1px solid #333; }
.trash { position: absolute; left: 193px; top: 13px; }
.stop { position: absolute; top: 28px; width: 9px; height: 14px; background: #f5ec4a; border: 2px solid #ccc; border-top-width: 4px; border-radius: 3px 3px 0 0; box-shadow: 0 0 0 1px #333; }
.stop.s1 { left: 6px; }
.stop.s2 { left: 123px; }
.stop.s3 { left: 146px; background: #faf7c0; }
.stop.s4 { left: 174px; border-color: #ddd; border-top-color: #111; }
.gp-grip { position: absolute; right: 6px; bottom: 5px; width: 20px; background: #666; height: 1px; margin: 0; }

/* swatch flyout */
.flyout { position: absolute; left: 951px; top: 294px; width: 272px; height: 212px; background: #444; border: 1px solid #2a2a2a; border-width: 1px 2px 2px 2px; box-shadow: 2px 2px 3px rgba(0, 0, 0, .35); }
.fly-op { display: flex; align-items: center; height: 17px; margin: 16px 0 0 39px; }
.fly-op span { width: 42px; font-size: 10px; color: #d2d2d2; font-weight: 600; letter-spacing: -.2px; }
.fly-op .dd { margin-left: 1px; }
.fly-body { display: flex; margin-top: 7px; }
.fly-side { width: 38px; padding: 1px 0 0 5px; flex: none; display: flex; flex-direction: column; }
.fs-btn { width: 28px; height: 28px; display: flex; align-items: center; justify-content: center; margin-top: 1px; }
.fs-btn.on { background: #333; margin-top: 7px; }
.fly-list { position: relative; width: 226px; height: 163px; background: #444; border: 1px solid #333; border-right: 0; }
.swatches { display: grid; grid-template-columns: repeat(16, 13.200px); grid-auto-rows: 13.500px; }
.swatches i { height: 13.500px; }
.grp { margin-top: 2px; }
.grp2 { margin-top: 2px; }
.grp i, .grp2 i { height: 14px; }
.folder { position: relative; }
.folder::after { content: ""; position: absolute; left: 1px; top: 3px; width: 11px; height: 9px; background: #b4b4b4; border-radius: 2px 2px 0 0; }
.fly-scroll { position: absolute; right: 0; top: 0; bottom: 0; width: 13px; background: #3b3b3b; border-left: 1px solid #333; display: flex; justify-content: center; }
.tri-up.small { border-width: 0 4px 5px; border-bottom-color: #aaa; top: 4px; }
.tri-down.small { border-width: 5px 4px 0; border-top-color: #aaa; bottom: 4px; }
.cursor { position: absolute; left: 130px; top: 62px; }
```
